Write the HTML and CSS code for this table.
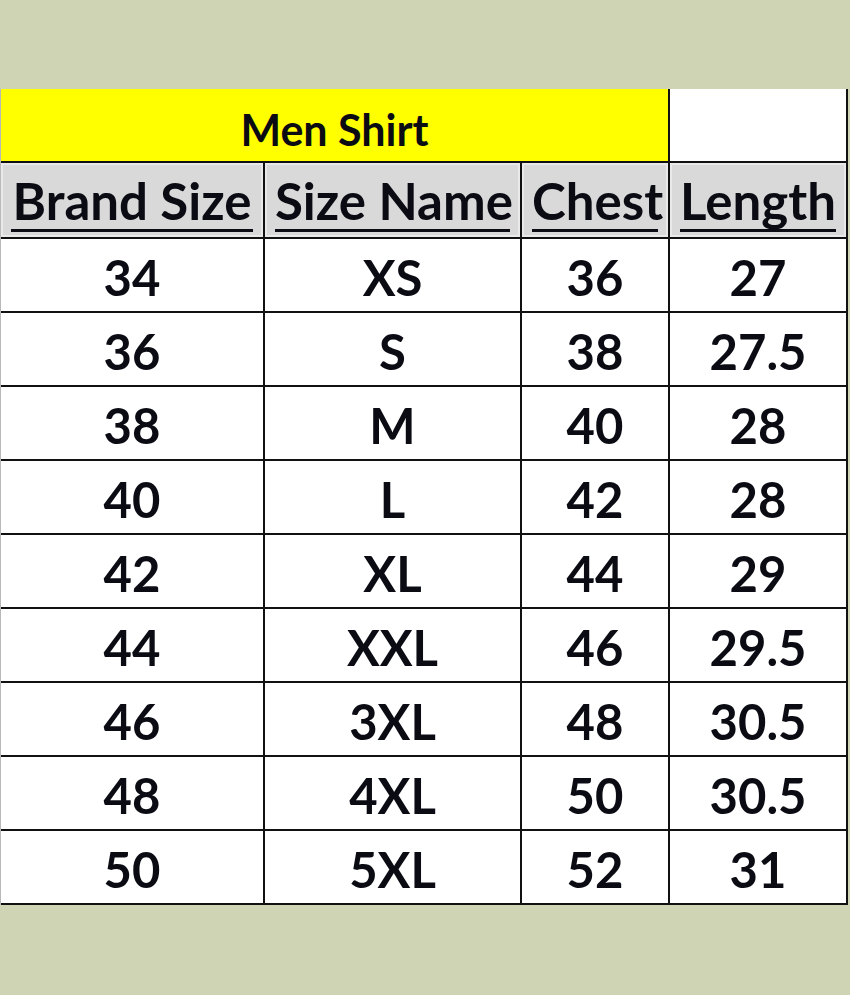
FILE: index.html
```html
<!DOCTYPE html>
<html lang="en">
<head>
<meta charset="utf-8">
<title>Men Shirt Size Chart</title>
<link rel="stylesheet" href="styles.css">
</head>
<body>
<div class="chart">
  <div class="cell title">Men Shirt</div>
  <div class="cell blank"></div>

  <div class="cell head"><span class="ul">Brand Size</span></div>
  <div class="cell head"><span class="ul">Size Name</span></div>
  <div class="cell head"><span class="ul">Chest</span></div>
  <div class="cell head"><span class="ul">Length</span></div>

  <div class="cell">34</div><div class="cell">XS</div><div class="cell">36</div><div class="cell">27</div>
  <div class="cell">36</div><div class="cell">S</div><div class="cell">38</div><div class="cell">27.5</div>
  <div class="cell">38</div><div class="cell">M</div><div class="cell">40</div><div class="cell">28</div>
  <div class="cell">40</div><div class="cell">L</div><div class="cell">42</div><div class="cell">28</div>
  <div class="cell">42</div><div class="cell">XL</div><div class="cell">44</div><div class="cell">29</div>
  <div class="cell">44</div><div class="cell">XXL</div><div class="cell">46</div><div class="cell">29.5</div>
  <div class="cell">46</div><div class="cell">3XL</div><div class="cell">48</div><div class="cell">30.5</div>
  <div class="cell">48</div><div class="cell">4XL</div><div class="cell">50</div><div class="cell">30.5</div>
  <div class="cell">50</div><div class="cell">5XL</div><div class="cell">52</div><div class="cell">31</div>
</div>
</body>
</html>
```

FILE: styles.css
```css
html, body {
  margin: 0;
  padding: 0;
  background: #cfd4b4;
}

body {
  padding-top: 89px;
  padding-left: 1px;
  height: 995px;
  box-sizing: border-box;
  font-family: Lato, "Open Sans", sans-serif;
  font-weight: 700;
  color: #0b0b14;
}

.chart {
  width: 847px;
  box-sizing: border-box;
  display: grid;
  grid-template-columns: 262px 255px 146px 176px;
  grid-template-rows: 72px 74px repeat(9, 72px);
  gap: 2px;
  padding: 0 2px 2px 0;
  background: #111111;
  box-shadow: -1px 0 0 #b9b9b9;
}

.cell {
  background: #ffffff;
  display: flex;
  align-items: center;
  justify-content: center;
  font-size: 49px;
  line-height: 1;
  padding-top: 4px;
  box-sizing: border-box;
}

.title {
  grid-column: 1 / 4;
  background: #ffff00;
  font-size: 43px;
  padding-top: 9px;
}

.blank {
  background: #ffffff;
}

.head {
  background: #d9d9d9;
  box-shadow: inset 0 0 0 2px #e9e9e9;
  font-size: 51px;
  padding: 4px 10px 0;
  align-items: flex-start;
}

.ul {
  display: block;
  width: 100%;
  text-align: center;
  padding-top: 8px;
  padding-bottom: 3px;
  border-bottom: 3px solid #0b0b14;
  white-space: nowrap;
}
```
